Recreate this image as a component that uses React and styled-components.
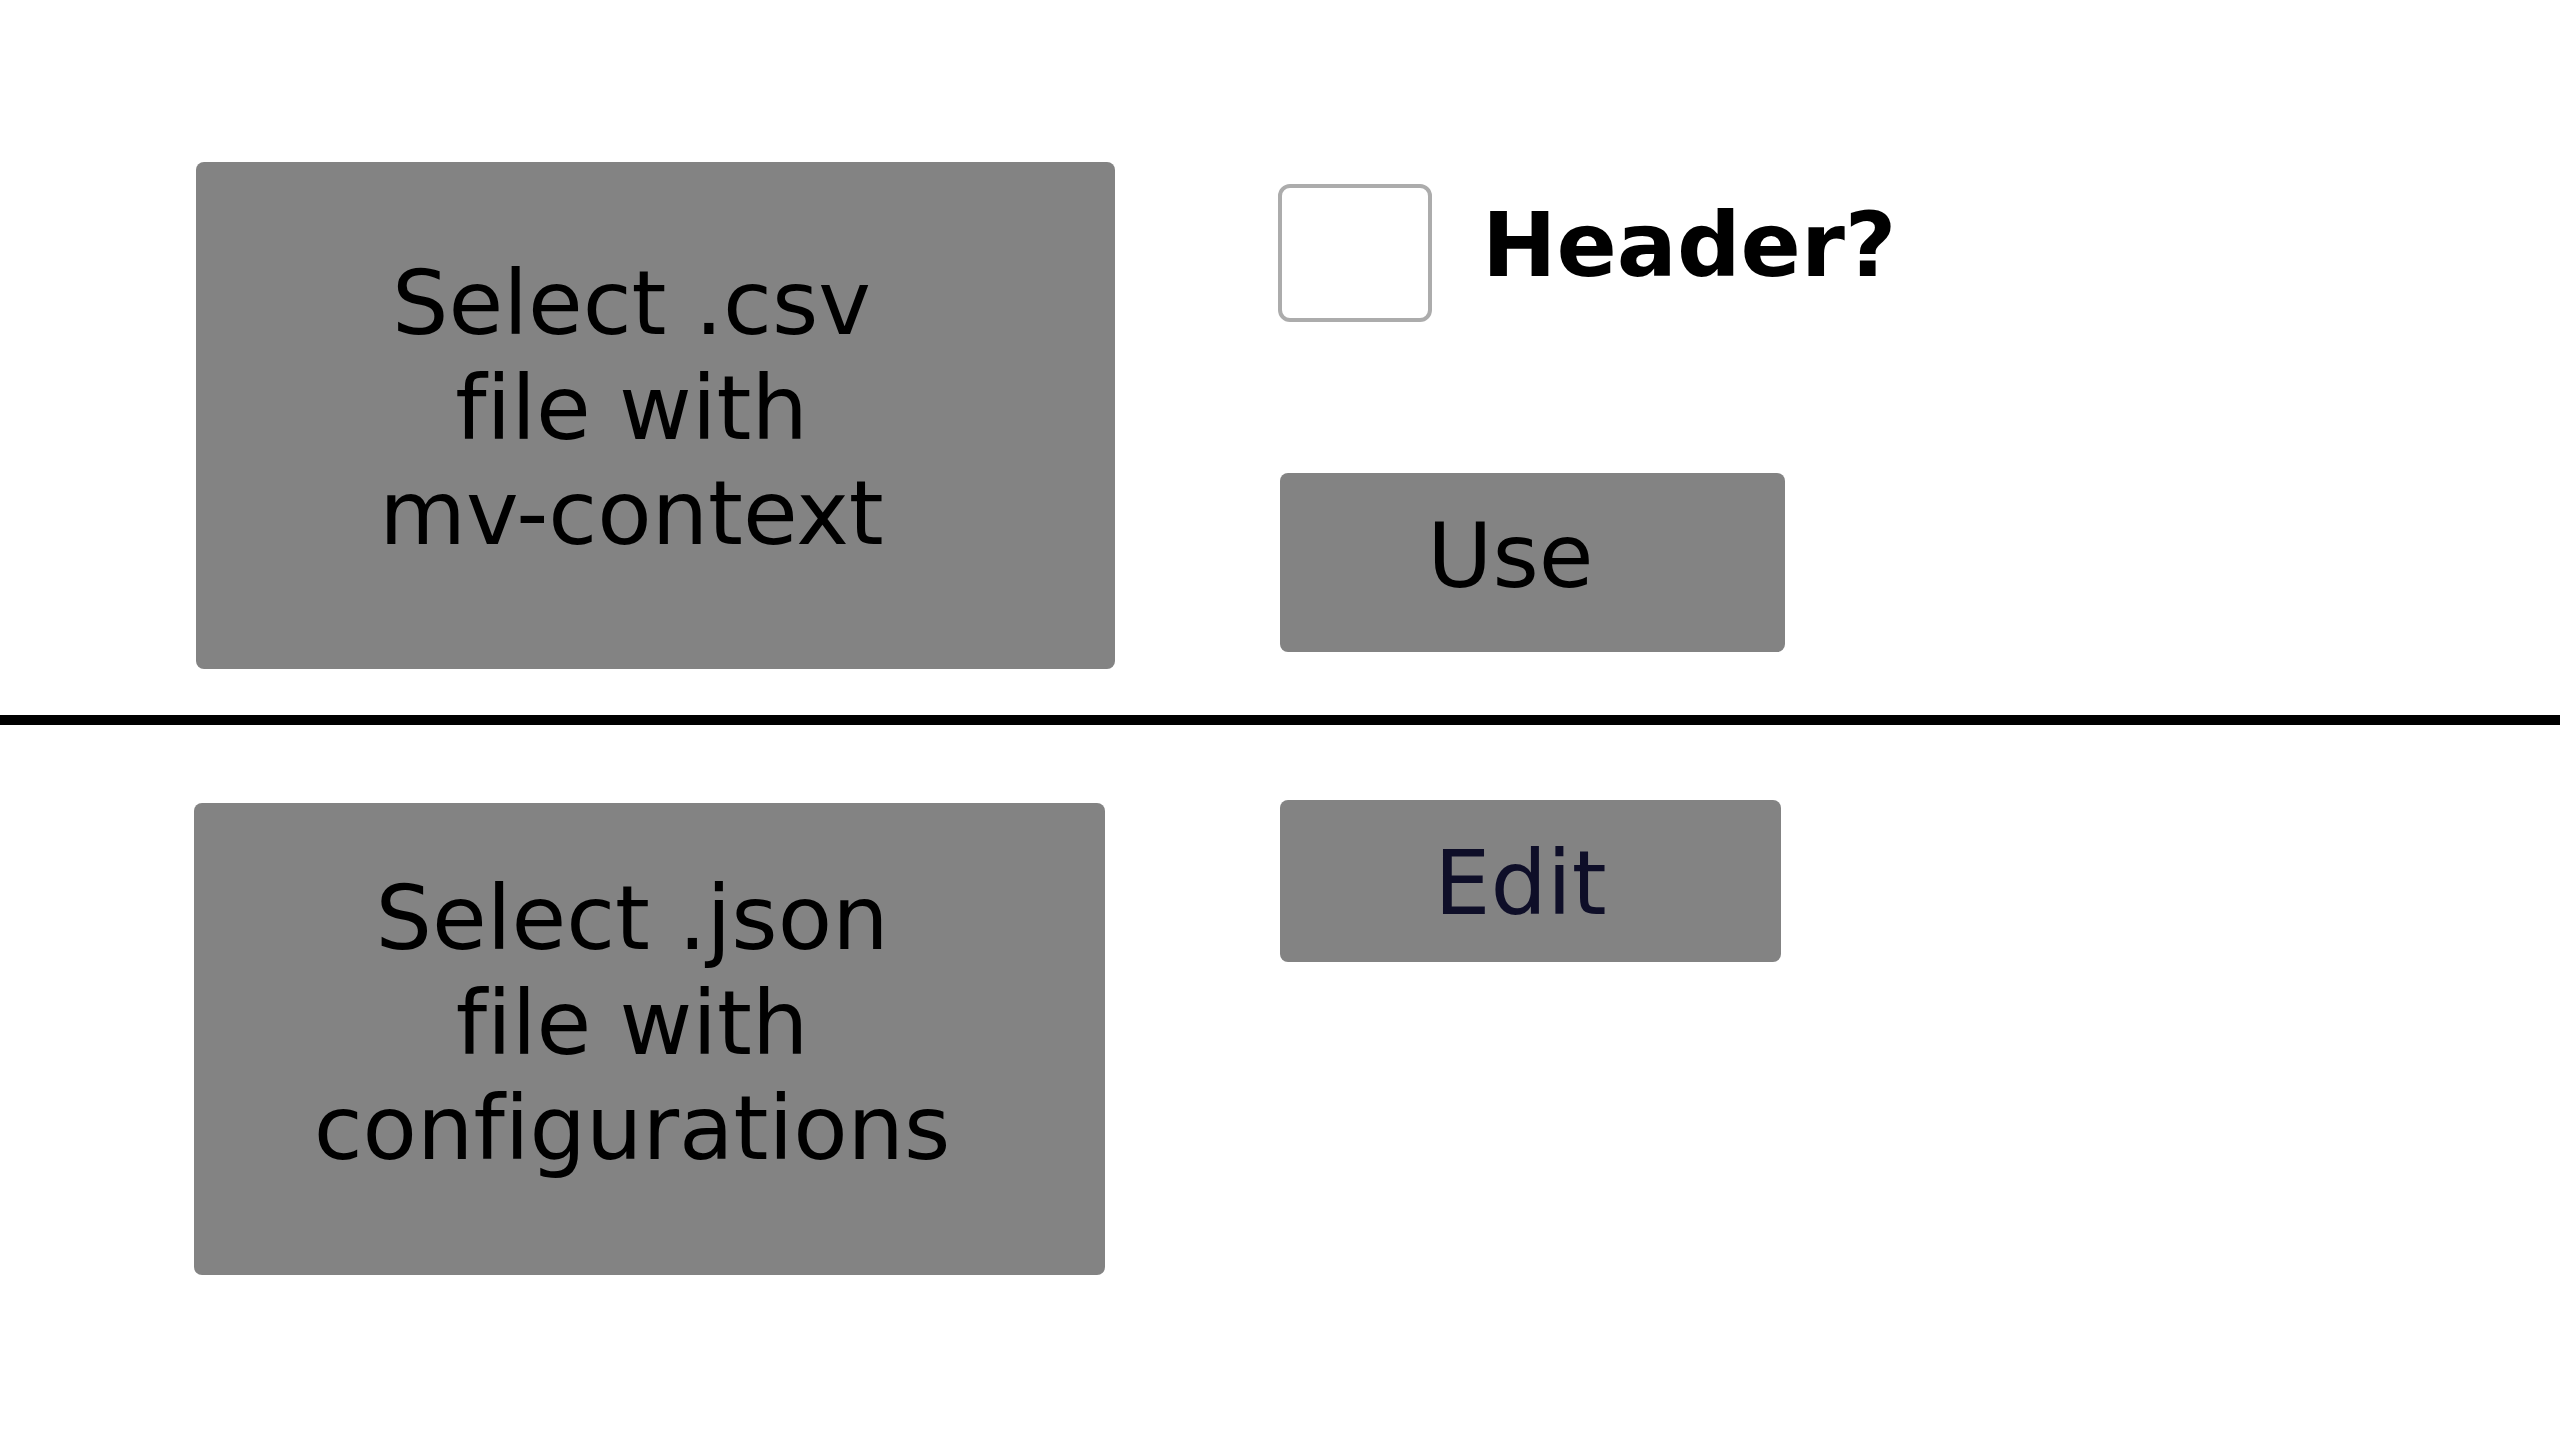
import React, { useState } from 'react';
import styled, { createGlobalStyle } from 'styled-components';

const GlobalStyle = createGlobalStyle`
  html, body {
    margin: 0;
    padding: 0;
    background: #ffffff;
  }
  body {
    font-family: "DejaVu Sans", "Liberation Sans", sans-serif;
    font-variant-ligatures: none;
  }
`;

const Page = styled.div`
  width: 2560px;
  min-height: 1440px;
  background: #ffffff;
`;

const Section = styled.section`
  display: flex;
  align-items: flex-start;
  padding: ${(p) => p.$pad};
`;

const FileBox = styled.label`
  box-sizing: border-box;
  display: flex;
  align-items: center;
  justify-content: center;
  width: ${(p) => p.$w}px;
  height: ${(p) => p.$h}px;
  margin-top: ${(p) => p.$top || 0}px;
  padding-right: ${(p) => p.$shift}px;
  padding-bottom: ${(p) => p.$lift || 0}px;
  background: #838383;
  border-radius: 8px;
  cursor: pointer;
`;

const BoxText = styled.span`
  font-size: 89px;
  line-height: 105px;
  color: #000000;
  text-align: center;
  font-variant-ligatures: none;
`;

const Side = styled.div`
  display: flex;
  flex-direction: column;
  margin-left: ${(p) => p.$left}px;
  margin-top: ${(p) => p.$top || 0}px;
`;

const CheckRow = styled.div`
  display: flex;
  align-items: flex-start;
  gap: 50px;
  margin-left: -2px;
`;

const CheckBox = styled.input`
  appearance: none;
  box-sizing: border-box;
  width: 154px;
  height: 138px;
  margin: 0;
  border: 4px solid #acacac;
  border-radius: 12px;
  background: #ffffff;
  cursor: pointer;

  &:checked {
    background: #838383;
  }
`;

const CheckLabel = styled.span`
  font-size: 89px;
  font-weight: bold;
  line-height: 1.164;
  color: #000000;
  margin-top: 10px;
`;

const ActionButton = styled.button`
  box-sizing: border-box;
  width: ${(p) => p.$w}px;
  height: ${(p) => p.$h}px;
  margin-top: ${(p) => p.$top || 0}px;
  padding: ${(p) => p.$pt || 0}px ${(p) => p.$shift}px ${(p) => p.$pb || 0}px 0;
  border: none;
  border-radius: 8px;
  background: #838383;
  color: ${(p) => p.$color};
  font-family: "DejaVu Sans", "Liberation Sans", sans-serif;
  font-size: 89px;
  line-height: 1.164;
  text-align: center;
  cursor: pointer;
`;

const Divider = styled.hr`
  margin: 46px 0 0 0;
  border: none;
  height: 10px;
  background: #000000;
`;

export default function App() {
  const [header, setHeader] = useState(false);

  return (
    <Page>
      <GlobalStyle />
      <Section $pad="162px 0 0 196px">
        <FileBox $w={919} $h={507} $shift={48} $lift={14}>
          <BoxText>
            Select .csv<br />file with<br />mv-context
          </BoxText>
        </FileBox>
        <Side $left={165} $top={22}>
          <CheckRow>
            <CheckBox
              type="checkbox"
              checked={header}
              onChange={(e) => setHeader(e.target.checked)}
            />
            <CheckLabel>Header?</CheckLabel>
          </CheckRow>
          <ActionButton $w={505} $h={179} $top={151} $shift={44} $pb={12} $color="#000000">
            Use
          </ActionButton>
        </Side>
      </Section>
      <Divider />
      <Section $pad="0 0 0 194px">
        <FileBox $w={911} $h={472} $top={78} $shift={35} $lift={32}>
          <BoxText>
            Select .json<br />file with<br />configurations
          </BoxText>
        </FileBox>
        <Side $left={175} $top={75}>
          <ActionButton $w={501} $h={162} $shift={20} $pt={6} $color="#0e0e28">
            Edit
          </ActionButton>
        </Side>
      </Section>
    </Page>
  );
}
